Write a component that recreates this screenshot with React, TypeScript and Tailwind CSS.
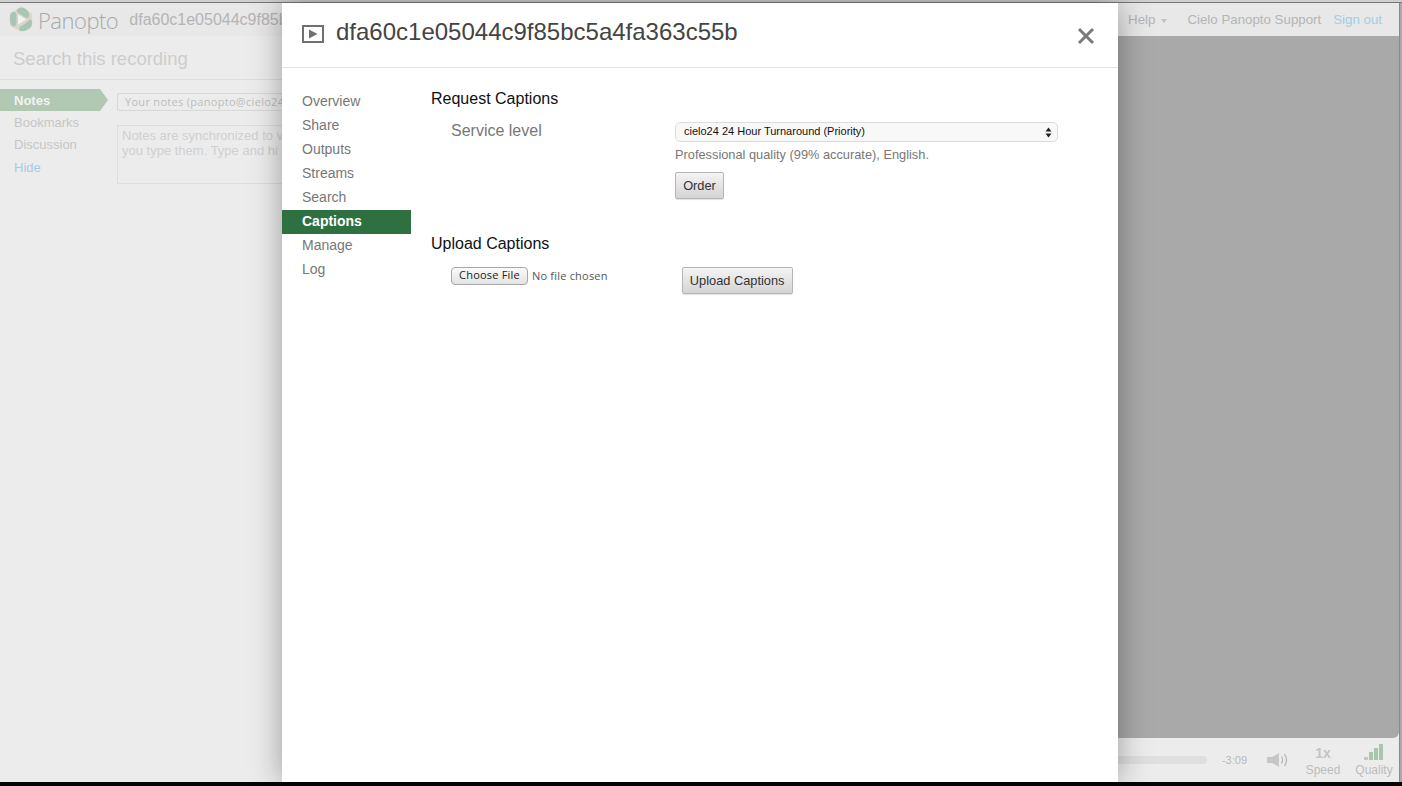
import React from "react";

const sans = "font-['Liberation_Sans',Arial,sans-serif]";

function Logo() {
  return (
    <svg width="24" height="25" viewBox="0 0 24 25" className="shrink-0">
      <path d="M12 0.5 L22.5 6 L23 18.5 L12 24.5 L1.5 19 L1 6.5 Z" fill="#d8d6c9" />
      <path d="M8 2.5 C10.5 0 14 0 16 1.5 C19 3.5 20.5 6 20 9 C19.5 11 17 11.2 15.5 10 L11 7 C9 6 7 4.5 8 2.5 Z" fill="#a8c6b3" />
      <path d="M22.5 13 C24 16 23 19.5 20.5 21.5 C18 23.5 14.5 24.5 12 24 C9.5 23.3 10 20.5 11.5 19.5 L16.5 16.5 C18.5 15 20.5 11.5 22.5 13 Z" fill="#a8c6b3" />
      <path d="M3.5 5 C5.5 4 7.5 6 7.5 8.5 L7.5 15.5 C7.5 18 6 20 4 19.5 C1.5 18.5 0.8 15 0.8 12 C0.8 9 1.5 6 3.5 5 Z" fill="#a8c6b3" />
      <path d="M9 7.5 L17.5 12.5 L9 17.5 Z" fill="#f1f3f0" />
    </svg>
  );
}

function Background() {
  return (
    <div className="flex h-[786px] w-[1402px] flex-col overflow-hidden bg-[#aaaaaa]">
      <div className="h-[2px] shrink-0 bg-[#cfcfcf]" />
      <div className="h-px shrink-0 bg-[#777777]" />
      <div className="mr-[2px] flex min-h-0 flex-1 flex-col border-r border-[#8a8a8a]">
        <header className="flex h-[33px] shrink-0 items-center bg-[#e8e8e8] pl-[9px] pr-[17px]">
          <div className="flex h-[33px] w-[273px] shrink-0 items-center overflow-hidden whitespace-nowrap">
            <Logo />
            <span className="ml-[5px] font-['Open_Sans',sans-serif] text-[22px] font-light leading-[30px] tracking-[-0.5px] text-[#a8a8a8]">Panopto</span>
            <span className="ml-[11px] text-[16px] text-[#b4b4b4]">dfa60c1e05044c9f85b</span>
          </div>
          <div className="ml-auto flex items-center text-[13.3px] text-[#b5b5b5]">
            <span>Help</span>
            <span className="ml-[6px] mt-[2px] h-0 w-0 border-x-[3.5px] border-t-[4px] border-x-transparent border-t-[#c4c4c4]" />
            <span className="ml-[20px]">Cielo Panopto Support</span>
            <span className="ml-[12px] text-[#a3cde4]">Sign out</span>
          </div>
        </header>
        <div className="flex min-h-0 flex-1 bg-[#ececec]">
          <aside className="w-[282px] shrink-0 overflow-hidden">
            <div className="flex h-[44px] items-center border-b border-[#dcdcdc] pl-[13px] pt-[2px] text-[18.5px] text-[#cdcdcd]">Search this recording</div>
            <div className="mt-[9px] flex">
              <nav className="w-[117px] shrink-0 text-[13px] leading-[22px] text-[#c6c6c6]">
                <div className="h-[22px] w-[108px] bg-[#b1c8b3] pl-[14px] pt-px font-bold text-[#f2f2f2] [clip-path:polygon(0_0,100px_0,108px_50%,100px_100%,0_100%)]">Notes</div>
                <div className="pl-[14px] pt-px">Bookmarks</div>
                <div className="pl-[14px]">Discussion</div>
                <div className="pl-[14px] pt-px text-[#a3cde4]">Hide</div>
              </nav>
              <div className="min-w-0 flex-1">
                <div className="mt-[4px] flex h-[18px] items-center overflow-hidden whitespace-nowrap rounded-l-[3px] border border-r-0 border-[#d8d8d8] pl-[7px] font-['Open_Sans',sans-serif] text-[11px] tracking-[0.3px] text-[#bcbcbc]">Your notes (panopto@cielo24</div>
                <div className="mt-[14px] h-[59px] overflow-hidden whitespace-nowrap border border-r-0 border-[#dddddd] pl-[4px] pt-[2px] text-[13px] leading-[15px] text-[#d0d0d0]">
                  <div>Notes are synchronized to v</div>
                  <div>you type them. Type and hi</div>
                </div>
              </div>
            </div>
          </aside>
          <div className="flex-1 rounded-br-[6px] bg-[#a9a9a9]" />
        </div>
        <footer className="flex h-[44px] shrink-0 items-center bg-[#ececec] pl-[282px]">
          <div className="h-[8px] flex-1 rounded-r-full bg-[#dfdfdf]" />
          <span className="ml-[15px] text-[11px] text-[#b8b8b8]">-3:09</span>
          <svg width="22" height="16" viewBox="0 0 22 16" fill="none" className="ml-[20px]">
            <path d="M0 5h5l7-4v14l-7-4H0z" fill="#c6c6c6" />
            <path d="M14.5 4.5c1.4 2.2 1.4 4.8 0 7M17.5 2c2.4 3.6 2.4 8.4 0 12" stroke="#b4b4b4" strokeWidth="1.2" />
          </svg>
          <div className="ml-[17px] flex w-[34px] flex-col items-center pt-px">
            <span className="text-[14px] font-bold leading-[18px] text-[#c4c4c4]">1x</span>
            <span className="text-[12px] leading-[16px] text-[#bcbcbc]">Speed</span>
          </div>
          <div className="ml-[16px] mr-[7px] flex w-[36px] flex-col items-center pt-px">
            <svg width="20" height="17" viewBox="0 0 20 17" className="mb-[1px]">
              <rect x="0" y="13" width="4" height="3" fill="#b8cfb8" />
              <rect x="5" y="8" width="4" height="8" fill="#aac6ad" />
              <rect x="10" y="4" width="4" height="12" fill="#aac6ad" />
              <rect x="15" y="0" width="4" height="16" fill="#aac6ad" />
            </svg>
            <span className="text-[12px] leading-[16px] text-[#bcbcbc]">Quality</span>
          </div>
        </footer>
      </div>
      <div className="h-[4px] shrink-0 bg-[#050505]" />
    </div>
  );
}

function GrayButton({ children, className }: { children: React.ReactNode; className: string }) {
  return (
    <button className={`rounded-[2px] border border-[#b5b5b5] bg-gradient-to-b from-[#f4f4f4] to-[#d4d4d4] text-[12.8px] text-[#333333] shadow-[0_1px_1px_rgba(0,0,0,0.12)] ${className}`}>
      {children}
    </button>
  );
}

const items = ["Overview", "Share", "Outputs", "Streams", "Search", "Captions", "Manage", "Log"];

function Modal() {
  return (
    <div className="absolute left-[282px] top-[3px] flex h-[779px] w-[836px] flex-col bg-white shadow-[0_0_30px_rgba(0,0,0,0.35)]">
      <div className="flex h-[65px] shrink-0 items-start border-b border-[#e3e3e3] pl-[20px]">
        <svg width="22" height="18" viewBox="0 0 22 18" className="mt-[22px] shrink-0">
          <rect x="1" y="1" width="20" height="16" fill="none" stroke="#707070" strokeWidth="2" />
          <path d="M7 4.5 L15.5 9 L7 13.5 Z" fill="#707070" />
        </svg>
        <h1 className="ml-[12px] mt-[14px] text-[24px] leading-[30px] text-[#444444]">dfa60c1e05044c9f85bc5a4fa363c55b</h1>
        <svg width="18" height="18" viewBox="0 0 18 18" className="ml-auto mr-[23px] mt-[24px] shrink-0">
          <path d="M2 2 L16 16 M16 2 L2 16" stroke="#7a7a7a" strokeWidth="3" />
        </svg>
      </div>
      <div className="flex min-h-0 flex-1">
        <nav className="mt-[22px] w-[129px] shrink-0 text-[14px] leading-[22px] text-[#777777]">
          {items.map((item) =>
            item === "Captions" ? (
              <div key={item} className="h-[24px] bg-[#2f7040] pl-[20px] font-bold text-white">{item}</div>
            ) : (
              <div key={item} className="h-[24px] pl-[20px]">{item}</div>
            )
          )}
        </nav>
        <section className="ml-[20px] min-w-0 flex-1">
          <h2 className="mt-[21px] text-[16px] leading-[20px] text-[#111111]">Request Captions</h2>
          <div className="mt-[12px] flex">
            <div className="ml-[20px] w-[224px] shrink-0 text-[16px] leading-[20px] text-[#777777]">Service level</div>
            <div className="pt-px">
              <div className="flex h-[20px] w-[383px] items-center justify-between rounded-[5px] border border-[#dcdcdc] bg-[#f8f8f8] pl-[8px] pr-[5px] text-[11px] text-[#111111]">
                <span className="pb-[2px]">cielo24 24 Hour Turnaround (Priority)</span>
                <svg width="7" height="11" viewBox="0 0 7 11">
                  <path d="M3.5 0.5 L6.5 4.5 H0.5 Z M3.5 10.5 L0.5 6.5 H6.5 Z" fill="#222222" />
                </svg>
              </div>
              <p className="mt-[3px] pb-px text-[12.8px] leading-[20px] text-[#777777]">Professional quality (99% accurate), English.</p>
              <GrayButton className="mt-[6px] block h-[27px] w-[49px]">Order</GrayButton>
            </div>
          </div>
          <h2 className="mt-[35px] text-[16px] leading-[20px] text-[#111111]">Upload Captions</h2>
          <div className="mt-[13px] flex items-start">
            <button className="ml-[20px] h-[18px] w-[77px] rounded-[4px] border border-[#a8a8a8] bg-gradient-to-b from-[#fbfbfb] to-[#e4e4e4] pb-[2px] font-['Open_Sans',sans-serif] text-[11px] leading-[14px] tracking-[0.2px] text-[#222222]">Choose File</button>
            <span className="ml-[4px] font-['Open_Sans',sans-serif] text-[11px] leading-[18px] tracking-[0.2px] text-[#555555]">No file chosen</span>
            <GrayButton className="ml-[74px] h-[27px] w-[111px]">Upload Captions</GrayButton>
          </div>
        </section>
      </div>
    </div>
  );
}

export default function App() {
  return (
    <div className={`relative h-[786px] w-[1402px] overflow-hidden ${sans}`}>
      <Background />
      <Modal />
    </div>
  );
}
